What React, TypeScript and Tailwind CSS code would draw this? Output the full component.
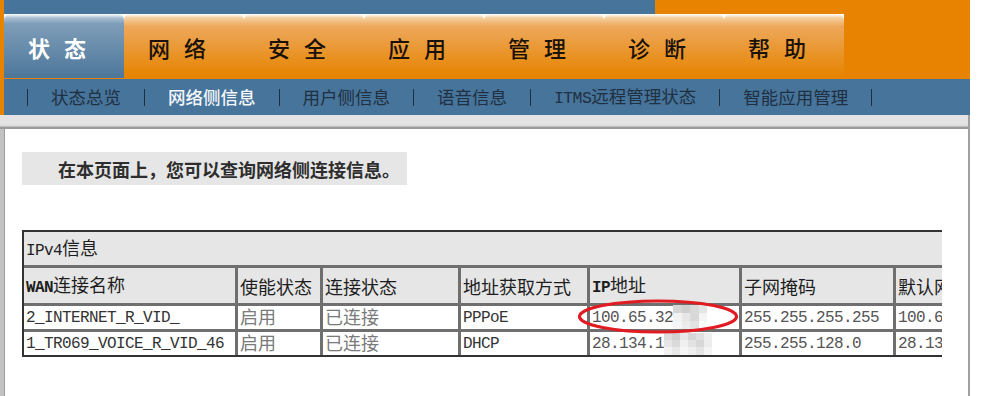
import React from "react";

const Mixed = ({ s, asciiClass, cjkClass }: { s: string; asciiClass: string; cjkClass: string }) => {
  const parts = s.match(/[\x00-\x7f]+|[^\x00-\x7f]+/g) || [];
  return (
    <span className="whitespace-nowrap">
      {parts.map((p, i) =>
        /^[\x00-\x7f]/.test(p) ? (
          <span key={i} className={asciiClass}>
            {p}
          </span>
        ) : (
          <span key={i} className={cjkClass}>
            {p}
          </span>
        )
      )}
    </span>
  );
};

const MONO = "font-['Liberation_Mono',monospace] text-[16px] tracking-[-0.6px]";
const CJK18 = "font-['Noto_Sans_CJK_SC',sans-serif] text-[18px]";
const CJKD = "font-['Noto_Sans_CJK_SC',sans-serif] text-[18px] -mt-[3px]";
const CJKNAV = "font-['Noto_Sans_CJK_SC',sans-serif] text-[17.5px]";

const tabs = ["状态", "网络", "安全", "应用", "管理", "诊断", "帮助"];
const subs = ["状态总览", "网络侧信息", "用户侧信息", "语音信息", "ITMS远程管理状态", "智能应用管理"];

const headers = ["WAN连接名称", "使能状态", "连接状态", "地址获取方式", "IP地址", "子网掩码", "默认网关"];

const mosaic1 = [
  "#d6d6d6", "#cfcfcf", "#d9d9d9", "#e4e4e4",
  "#f2f2f2", "#e6e6e6", "#d8d8d8", "#f4f4f4",
  "#f6f6f6", "#ececec", "#e2e2e2", "#fafafa",
];
const mosaic2 = [
  "#dcdcdc", "#d2d2d2", "#e8e8e8", "#d6d6d6", "#e0e0e0", "#eeeeee",
  "#e6e6e6", "#dadada", "#f0f0f0", "#e2e2e2", "#d8d8d8", "#ececec",
  "#f2f2f2", "#e8e8e8", "#f6f6f6", "#eeeeee", "#e4e4e4", "#f4f4f4",
];

const Mosaic1 = () => (
  <span className="inline-grid grid-cols-4 w-[34px] h-[24px] -mt-[2px]">
    {mosaic1.map((c, i) => (
      <span key={i} style={{ background: c }} />
    ))}
  </span>
);
const Mosaic2 = () => (
  <span className="inline-grid grid-cols-6 w-[48px] h-[22px]">
    {mosaic2.map((c, i) => (
      <span key={i} style={{ background: c }} />
    ))}
  </span>
);

const cellData = "h-[23px] bg-white flex items-center px-[2px] leading-none whitespace-nowrap";

export default function App() {
  return (
    <div className="w-[997px] h-[396px] overflow-hidden bg-white font-['Noto_Sans_CJK_SC',sans-serif]">
      <div className="w-[970px]">
        {/* Header */}
        <div className="bg-[#e78300] pl-[4px]">
          <div className="flex h-[14px]">
            <div className="w-[651px] bg-[#47749a]" />
          </div>
          <div className="flex h-[65px] items-start">
            <div className="flex h-[64px] bg-white">
              {tabs.map((t, i) => (
                <div
                  key={t}
                  className={
                    i === 0
                      ? "w-[120px] h-[64px] rounded-t-[6px] flex items-center pl-[24px] bg-[linear-gradient(to_bottom,#ffffff_0px,#a9bfd2_4px,#7e9db9_10px,#4e789b_62px)]"
                      : "w-[120px] h-[64px] rounded-t-[6px] flex items-center pl-[24px] bg-[linear-gradient(to_bottom,#ffffff_0px,#f5cfa0_4px,#eda85c_12px,#e68400_62px)]"
                  }
                >
                  <span
                    className={
                      i === 0
                        ? "text-[22px] font-bold tracking-[14px] text-white leading-none mt-[2px]"
                        : "text-[22px] font-medium tracking-[14px] text-[#1a1208] leading-none mt-[2px]"
                    }
                  >
                    {t}
                  </span>
                </div>
              ))}
            </div>
          </div>
          <div className="h-[36px] bg-[#47749a] flex items-center gap-[23px] pl-[23px]">
            <div className="w-[1px] h-[17px] bg-[#1e2f40]" />
            {subs.map((s, i) => (
              <React.Fragment key={s}>
                <span
                  className={
                    i === 1
                      ? "text-[#f4f7fa] font-medium leading-none"
                      : "text-[#1f3042] leading-none"
                  }
                >
                  <Mixed s={s} asciiClass="font-['Liberation_Mono',monospace] text-[16.5px] tracking-[-0.6px]" cjkClass={CJKNAV} />
                </span>
                <div className="w-[1px] h-[17px] bg-[#1e2f40]" />
              </React.Fragment>
            ))}
          </div>
        </div>

        {/* gray bar */}
        <div className="h-[14px] bg-[linear-gradient(to_bottom,#e4e4e4_0%,#e2e2e2_70%,#cfcfcf_80%,#9a9a9a_88%,#9a9a9a_100%)] border-r-2 border-[#a0a0a0]" />

        {/* content */}
        <div className="flex h-[267px]">
          <div className="w-[4px] bg-[#c2c2c2]" />
          <div className="w-[1px] bg-[#9c9c9c]" />
          <div className="flex-1 border-r-2 border-[#a0a0a0] pl-[17px] pt-[23px]">
            <div className="w-[385px] h-[33px] bg-[#e6e6e6] flex items-center pl-[36px]">
              <span className="text-[18px] font-bold text-[#2e2e2e] leading-none">
                在本页面上，您可以查询网络侧连接信息。
              </span>
            </div>

            <div className="relative w-[920px] overflow-hidden mt-[45px]">
              <div className="w-max border-2 border-[#333] bg-[#6f6f6f] grid grid-cols-[211px_82px_135px_126px_149px_151px_150px] gap-[3px]">
                <div className="col-span-7 h-[33px] bg-[#e6e6e6] flex items-center px-[2px] text-[#1e1e1e] leading-none">
                  <Mixed s="IPv4信息" asciiClass={MONO} cjkClass={CJK18} />
                </div>
                {headers.map((h) => (
                  <div key={h} className="h-[35px] bg-[#e6e6e6] flex items-center px-[2px] text-[#1e1e1e] leading-none whitespace-nowrap overflow-hidden">
                    <Mixed s={h} asciiClass={MONO + " font-bold"} cjkClass={CJK18} />
                  </div>
                ))}

                {/* row 1 */}
                <div className={cellData + " text-[#333]"}>
                  <span className={MONO}>2_INTERNET_R_VID_</span>
                </div>
                <div className={cellData + " text-[#7a7a7a]"}>
                  <span className={CJKD}>启用</span>
                </div>
                <div className={cellData + " text-[#7a7a7a]"}>
                  <span className={CJKD}>已连接</span>
                </div>
                <div className={cellData + " text-[#333]"}>
                  <span className={MONO}>PPPoE</span>
                </div>
                <div className={cellData + " text-[#555]"}>
                  <span className={MONO}>100.65.32</span>
                  <Mosaic1 />
                </div>
                <div className={cellData + " text-[#555]"}>
                  <span className={MONO}>255.255.255.255</span>
                </div>
                <div className={cellData + " text-[#555]"}>
                  <span className={MONO}>100.65.32.1</span>
                </div>

                {/* row 2 */}
                <div className={cellData + " text-[#333]"}>
                  <span className={MONO}>1_TR069_VOICE_R_VID_46</span>
                </div>
                <div className={cellData + " text-[#7a7a7a]"}>
                  <span className={CJKD}>启用</span>
                </div>
                <div className={cellData + " text-[#7a7a7a]"}>
                  <span className={CJKD}>已连接</span>
                </div>
                <div className={cellData + " text-[#333]"}>
                  <span className={MONO}>DHCP</span>
                </div>
                <div className={cellData + " text-[#555]"}>
                  <span className={MONO}>28.134.1</span>
                  <Mosaic2 />
                </div>
                <div className={cellData + " text-[#555]"}>
                  <span className={MONO}>255.255.128.0</span>
                </div>
                <div className={cellData + " text-[#555]"}>
                  <span className={MONO}>28.134.1.1</span>
                </div>
              </div>

              <svg
                className="absolute left-[555px] top-[69px]"
                width="162"
                height="35"
                viewBox="0 0 162 35"
              >
                <ellipse cx="81" cy="17.5" rx="78.5" ry="15.5" fill="none" stroke="#e01b22" strokeWidth="3.2" />
              </svg>
            </div>
          </div>
        </div>
      </div>
    </div>
  );
}
